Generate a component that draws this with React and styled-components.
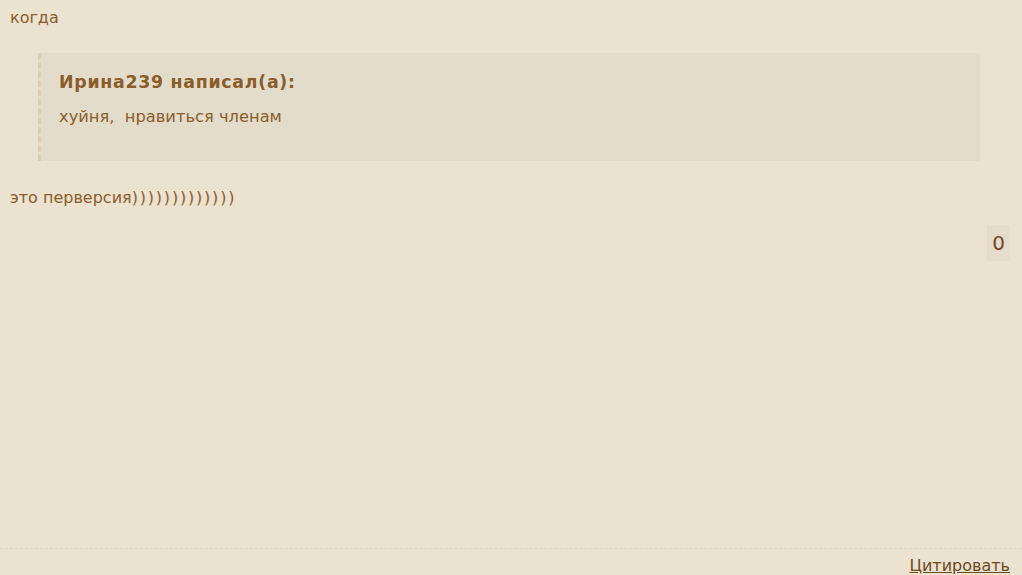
import styled, { createGlobalStyle } from "styled-components"

const Global = createGlobalStyle`
  html, body {
    margin: 0;
    padding: 0;
    background: #ebe2d0;
  }
  body {
    font-family: "DejaVu Sans", Verdana, sans-serif;
    color: #8a5d2b;
  }
`

const Post = styled.div`
  height: 575px;
  display: flex;
  flex-direction: column;
  overflow: hidden;
`

const Body = styled.div`
  flex: 1;
  padding: 8px 12px 0 10px;
  font-size: 16px;
  line-height: 20px;
`

const Line = styled.div`
  margin: 0;
`

// DejaVu parens are narrower than Verdana's
const Smiles = styled.span`
  letter-spacing: 1.8px;
`

const Quote = styled.blockquote`
  margin: 25px 30px 27px 28px;
  padding: 19px 18px 34px 18px;
  background: #e4dcca;
  border-left: 3px dashed #dccfb6;
`

const QuoteTitle = styled.div`
  font-weight: bold;
  font-size: 17.4px;
  line-height: 20px;
  letter-spacing: 0.7px;
  margin-bottom: 15px;
  color: #8a5d2b;
`

const QuoteText = styled.div`
  font-size: 16.3px;
  line-height: 20px;
  white-space: pre;
`

const Rating = styled.div`
  display: flex;
  justify-content: flex-end;
  margin-top: 17px;
`

const Count = styled.span`
  background: #e5dccb;
  color: #6e4a22;
  font-size: 20px;
  line-height: 36px;
  width: 23px;
  text-align: center;
`

const Footer = styled.div`
  border-top: 1px dashed #e2d5bc;
  display: flex;
  justify-content: flex-end;
  padding: 7px 12px 0 0;
  height: 19px;
`

const QuoteLink = styled.a`
  color: #6b4a1e;
  font-size: 16px;
  line-height: 20px;
  text-decoration: underline;
  cursor: pointer;
`

export default function App() {
  return (
    <>
      <Global />
      <Post>
        <Body>
          <Line>когда</Line>
          <Quote>
            <QuoteTitle>Ирина239 написал(а):</QuoteTitle>
            <QuoteText>хуйня,  нравиться членам</QuoteText>
          </Quote>
          <Line>это перверсия<Smiles>)))))))))))))</Smiles></Line>
          <Rating>
            <Count>0</Count>
          </Rating>
        </Body>
        <Footer>
          <QuoteLink>Цитировать</QuoteLink>
        </Footer>
      </Post>
    </>
  )
}
